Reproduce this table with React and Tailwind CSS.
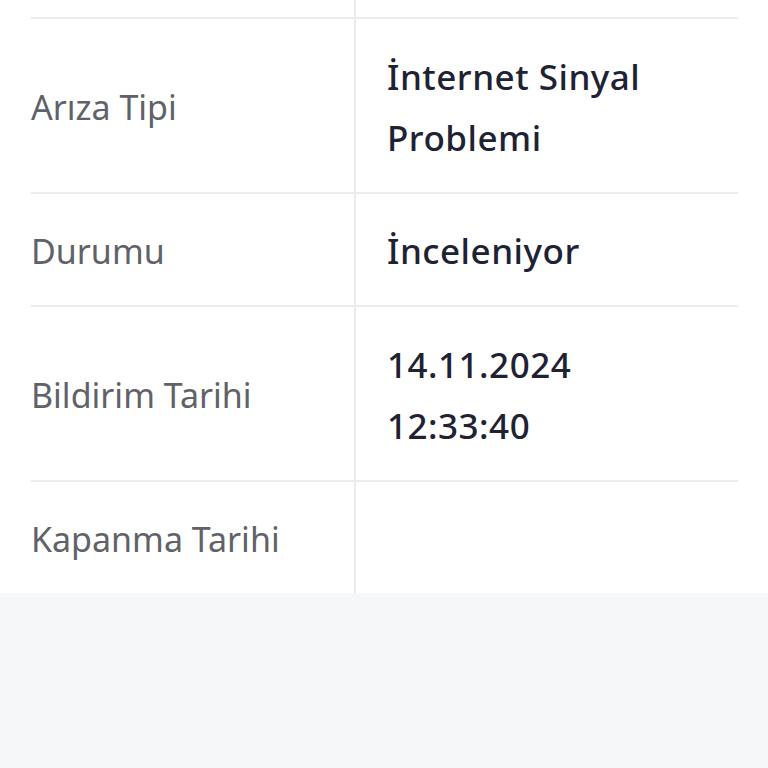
import React from "react";

const rows = [
  { label: "Arıza Tipi", value: ["İnternet Sinyal", "Problemi"], h: "h-[175px]" },
  { label: "Durumu", value: ["İnceleniyor"], h: "h-[113px]" },
  { label: "Bildirim Tarihi", value: ["14.11.2024", "12:33:40"], h: "h-[175px]" },
  { label: "Kapanma Tarihi", value: [], h: "h-[113px]" },
];

export default function App() {
  return (
    <div className="w-[768px] h-[768px] bg-[#f6f7f9] overflow-hidden" style={{ fontFamily: "'Noto Sans', sans-serif" }}>
      <div className="bg-white pl-[31px] pr-[30px]">
        <div className="grid grid-cols-[323px_1fr]">
          <div className="h-[17px]"></div>
          <div className="h-[17px] border-l-2 border-[#ececec]"></div>
          {rows.map((r, i) => (
            <React.Fragment key={i}>
              <div className={`flex items-center border-t-2 border-[#ececec] ${r.h}`}>
                <span className="text-[34px] text-[#5f6268] leading-none pt-[3px]">{r.label}</span>
              </div>
              <div className="flex items-center border-t-2 border-l-2 border-[#ececec] pl-[31px]">
                <div className="flex flex-col text-[35px] font-medium tracking-[0.5px] text-[#1e2233] leading-[61px] pt-[2px]">
                  {r.value.map((v, j) => (
                    <span key={j}>{v}</span>
                  ))}
                </div>
              </div>
            </React.Fragment>
          ))}
        </div>
      </div>
    </div>
  );
}
